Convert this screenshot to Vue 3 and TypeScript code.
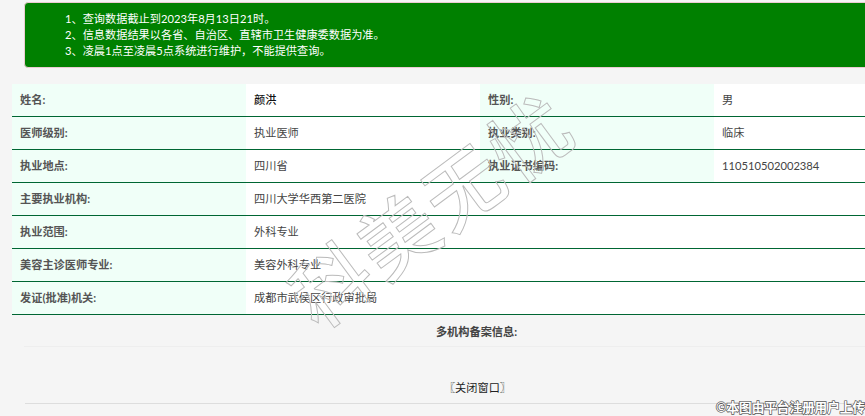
<script setup lang="ts">
interface Row { label: string; value: string; label2?: string; value2?: string; strong?: boolean }
const rows: Row[] = [
  { label: '姓名:', value: '颜洪', label2: '性别:', value2: '男', strong: true },
  { label: '医师级别:', value: '执业医师', label2: '执业类别:', value2: '临床' },
  { label: '执业地点:', value: '四川省', label2: '执业证书编码:', value2: '110510502002384' },
  { label: '主要执业机构:', value: '四川大学华西第二医院' },
  { label: '执业范围:', value: '外科专业' },
  { label: '美容主诊医师专业:', value: '美容外科专业' },
  { label: '发证(批准)机关:', value: '成都市武侯区行政审批局' },
]
const notices = [
  '1、查询数据截止到2023年8月13日21时。',
  '2、信息数据结果以各省、自治区、直辖市卫生健康委数据为准。',
  '3、凌晨1点至凌晨5点系统进行维护\uFF0C不能提供查询。',
]
</script>

<template>
  <div class="page">
    <div class="sheet">
      <div class="notice">
        <p v-for="n in notices" :key="n">{{ n }}</p>
      </div>
      <div class="table">
        <div v-for="r in rows" :key="r.label" class="row">
          <div class="cell label">{{ r.label }}</div>
          <div class="cell" :class="{ wide: !r.label2, strong: r.strong }">{{ r.value }}</div>
          <template v-if="r.label2">
            <div class="cell label">{{ r.label2 }}</div>
            <div class="cell">{{ r.value2 }}</div>
          </template>
        </div>
      </div>
      <div class="multi">多机构备案信息:</div>
      <div class="close">〖关闭窗口〗</div>
    </div>
    <div class="mark">科美无忧</div>
    <div class="credit">©本图由平台注册用户上传</div>
  </div>
</template>

<style>
html, body { margin: 0; background: #f5f5f5; overflow: hidden; }
</style>

<style scoped>
.page {
  position: relative;
  width: 865px;
  height: 416px;
  overflow: hidden;
  background: #f5f5f5;
  font-family: Lato, "Noto Sans CJK SC", sans-serif;
  font-size: 11.2px;
  color: #444;
}
.sheet { width: 940px; padding-top: 2px; }
.notice {
  margin-left: 24px;
  width: 905px;
  height: 64px;
  background: #008000;
  border: 1px solid #ebccd1;
  border-radius: 4px;
  color: #fff;
  display: flex;
  flex-direction: column;
  justify-content: center;
}
.notice p { margin: 0 0 0 40px; line-height: 16px; }
.table { margin: 16px 0 0 12px; width: 928px; }
.row {
  display: grid;
  grid-template-columns: 234px 234px 234px 1fr;
  height: 33px;
  box-sizing: border-box;
  border-bottom: 1px solid #006633;
  background: #fff;
}
.cell { padding-left: 8px; line-height: 31px; color: #444; }
.label { background: #f0fff8; font-weight: 700; color: #555; }
.wide { grid-column: 2 / 5; }
.strong { font-weight: 500; color: #111; }
.multi {
  margin-left: 24px;
  width: 905px;
  height: 32px;
  line-height: 33px;
  text-align: center;
  font-weight: 700;
  color: #444;
  border-bottom: 1px solid #eee;
  box-sizing: border-box;
}
.close {
  margin-left: 25px;
  width: 905px;
  margin-top: 24px;
  height: 33px;
  box-sizing: border-box;
  line-height: 34px;
  text-align: center;
  color: #222;
  border-bottom: 1px solid #ddd;
}
.mark {
  position: absolute;
  left: 232px;
  top: 170px;
  width: 400px;
  line-height: 80px;
  text-align: center;
  white-space: nowrap;
  font-size: 78px;
  font-weight: 500;
  letter-spacing: 4px;
  color: transparent;
  -webkit-text-stroke: 1px #bbb;
  transform: rotate(-36.5deg);
  pointer-events: none;
}
.credit {
  position: absolute;
  right: 0;
  bottom: 0;
  font-size: 12.6px;
  font-weight: 700;
  line-height: 16px;
  color: #fff;
  -webkit-text-stroke: 1.4px #555;
  paint-order: stroke fill;
  white-space: nowrap;
}
</style>
